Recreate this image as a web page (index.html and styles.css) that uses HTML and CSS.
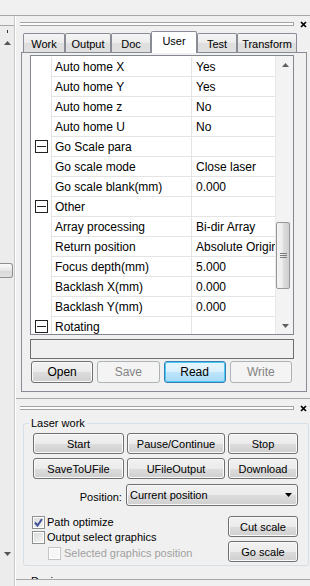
FILE: index.html
```html
<!DOCTYPE html>
<html>
	<head>
		<meta charset="UTF-8"/>
		<title>User parameters</title>
<link rel="stylesheet" href="styles.css">
	</head>
	<body>
		<div class="screen">
			<div class="top-gap"></div>
			<div class="main">
				<div class="side">
					<div class="side-head"></div>
					<div class="side-track">
						<span class="side-tick"></span>
						<svg class="side-up" width="7" height="4"><path d="M0 4 L3.5 0 L7 4Z" fill="#555"/></svg>
						<span class="side-thumb"></span>
						<svg class="side-down" width="7" height="4"><path d="M0 0 L3.5 4 L7 0Z" fill="#555"/></svg>
					</div>
				</div>

				<div class="docks">
					<section class="dock dock-props">
						<div class="dock-title">
							<span class="grip"></span>
							<svg class="close" width="7" height="7"><path d="M1 1 L6 6 M6 1 L1 6" stroke="#000" stroke-width="1.7"/></svg>
						</div>

						<div class="tabs">
							<div class="tab tab-work">Work</div>
							<div class="tab tab-output">Output</div>
							<div class="tab tab-doc">Doc</div>
							<div class="tab tab-user active">User</div>
							<div class="tab tab-test">Test</div>
							<div class="tab tab-transform">Transform</div>
						</div>

						<div class="tab-pane">
							<div class="pgrid">
								<div class="pg-rows" id="pg-rows"></div>
								<div class="pg-scroll">
									<div class="sb-btn"><svg width="7" height="4"><path d="M0 4 L3.5 0 L7 4Z" fill="#606060"/></svg></div>
									<div class="sb-track">
										<div class="sb-thumb">
											<svg width="7" height="5"><path d="M0 0.5 H7 M0 2.5 H7 M0 4.5 H7" stroke="#7d7d7d" stroke-width="1"/></svg>
										</div>
									</div>
									<div class="sb-btn"><svg width="7" height="4"><path d="M0 0 L3.5 4 L7 0Z" fill="#606060"/></svg></div>
								</div>
							</div>
							<div class="desc"></div>
							<div class="btn-row">
								<div class="btn">Open</div>
								<div class="btn disabled">Save</div>
								<div class="btn default">Read</div>
								<div class="btn disabled">Write</div>
							</div>
						</div>
					</section>

					<section class="dock dock-laser">
						<div class="dock-title">
							<span class="grip"></span>
							<svg class="close" width="7" height="7"><path d="M1 1 L6 6 M6 1 L1 6" stroke="#000" stroke-width="1.7"/></svg>
						</div>

						<fieldset class="group">
							<legend>Laser work</legend>
							<div class="work-btns">
								<div class="btn">Start</div>
								<div class="btn">Pause/Continue</div>
								<div class="btn">Stop</div>
								<div class="btn">SaveToUFile</div>
								<div class="btn">UFileOutput</div>
								<div class="btn">Download</div>
							</div>

							<div class="position-row">
								<span class="position-label">Position:</span>
								<div class="combo">
									<span>Current position</span>
									<svg width="7" height="4"><path d="M0 0 L3.5 4 L7 0Z" fill="#000"/></svg>
								</div>
							</div>

							<div class="options">
								<div class="checks">
									<label class="check"><span class="cb checked"><svg width="11" height="11"><path d="M2 5.5 L4.5 8.5 L9 2" stroke="#41539a" stroke-width="2" fill="none"/></svg></span>Path optimize</label>
									<label class="check"><span class="cb"></span>Output select graphics</label>
									<label class="check sub disabled"><span class="cb"></span>Selected graphics position</label>
								</div>
								<div class="scale-btns">
									<div class="btn">Cut scale</div>
									<div class="btn">Go scale</div>
								</div>
							</div>
						</fieldset>

						<fieldset class="group">
							<legend>Device</legend>
						</fieldset>
					</section>

					<div class="dock-bottom"></div>
				</div>
			</div>
		</div>

		<script>
			const params = [
				{ name: "Auto home X", value: "Yes" },
				{ name: "Auto home Y", value: "Yes" },
				{ name: "Auto home z", value: "No" },
				{ name: "Auto home U", value: "No" },
				{ name: "Go Scale para", group: true },
				{ name: "Go scale mode", value: "Close laser" },
				{ name: "Go scale blank(mm)", value: "0.000" },
				{ name: "Other", group: true },
				{ name: "Array processing", value: "Bi-dir Array" },
				{ name: "Return position", value: "Absolute Origin" },
				{ name: "Focus depth(mm)", value: "5.000" },
				{ name: "Backlash X(mm)", value: "0.000" },
				{ name: "Backlash Y(mm)", value: "0.000" },
				{ name: "Rotating", group: true }
			];

			const rows = document.getElementById('pg-rows');
			const toggle = '<svg width="13" height="13"><rect x="0.5" y="0.5" width="12" height="12" fill="#fff" stroke="#222"/><path d="M2 6.5 H11" stroke="#222"/></svg>';

			params.forEach(p => {
				const row = document.createElement('div');
				row.className = 'pg-row';
				row.innerHTML = `
					<div class="pg-margin">${p.group ? toggle : ''}</div>
					<div class="pg-name">${p.name}</div>
					<div class="pg-value">${p.value || ''}</div>
				`;
				rows.appendChild(row);
			});
		</script>
	</body>
</html>
```

FILE: styles.css
```css
* {
	box-sizing: border-box;
}

body {
	margin: 0;
	background: #f0f0f0;
	font-family: "Liberation Sans", Arial, sans-serif;
	font-size: 11px;
	color: #000;
}

.screen {
	width: 310px;
	height: 586px;
	overflow: hidden;
	display: flex;
	flex-direction: column;
}

.top-gap {
	height: 15px;
	flex: none;
}

.main {
	height: 571px;
	flex: none;
	border-top: 1px solid #a7a7a7;
	display: flex;
	overflow: hidden;
}

/* left neighbour strip */
.side {
	width: 15px;
	flex: none;
	border-right: 1px solid #c9c9c9;
	display: flex;
	flex-direction: column;
}

.side-head {
	height: 10px;
	border-bottom: 1px solid #a7a7a7;
}

.side-track {
	flex: 1;
	background: #ececec;
	display: flex;
	flex-direction: column;
	align-items: center;
}

.side-tick {
	width: 1px;
	height: 3px;
	margin-top: 4px;
	background: #333;
}

.side-up {
	margin-top: 8px;
	flex: none;
}

.side-thumb {
	align-self: flex-start;
	width: 13px;
	height: 15px;
	margin-top: 218px;
	border: 1px solid #8f8f8f;
	border-left: none;
	border-radius: 0 3px 3px 0;
	background: linear-gradient(#fbfbfb, #e6e6e6 50%, #d8d8d8 51%, #e2e2e2);
}

.side-down {
	margin-top: 274px;
	flex: none;
}

/* docked panels */
.docks {
	flex: 1;
	border-left: 1px solid #fff;
	display: flex;
	flex-direction: column;
	overflow: hidden;
}

.dock-props {
	flex: none;
	margin-bottom: 6px;
}

.dock-laser {
	flex: none;
	height: 181px;
	border-top: 1px solid #a7a7a7;
	overflow: hidden;
}

.dock-bottom {
	flex: 1;
	border-top: 1px solid #a7a7a7;
}

.dock-title {
	height: 15px;
	display: flex;
	align-items: flex-start;
	padding: 0 3px 0 4px;
}

.grip {
	width: 274px;
	height: 4px;
	margin-top: 6px;
	border: 1px solid #a4a4a4;
	border-left: none;
	background: #fbfbfb;
}

.close {
	margin: 5px 0 0 auto;
}

.dock-laser .grip {
	margin-top: 7px;
}

.dock-laser .close {
	margin-top: 6px;
}

/* tabs */
.tabs {
	height: 21px;
	display: flex;
	align-items: flex-end;
	padding-left: 7px;
}

.tab {
	height: 19px;
	border: 1px solid #898c95;
	border-bottom: none;
	border-radius: 2px 2px 0 0;
	background: linear-gradient(#f5f5f5, #ebebeb 50%, #dedede 51%, #e0e0e0);
	display: flex;
	align-items: center;
	justify-content: center;
	padding-top: 1px;
}

.tab.active {
	height: 22px;
	margin-bottom: -1px;
	background: #fff;
	z-index: 1;
	padding-top: 0;
	padding-bottom: 4px;
}

.tab-work { width: 42px; }
.tab-output { width: 46px; }
.tab-doc { width: 40px; }
.tab-user { width: 46px; }
.tab-test { width: 40px; }
.tab-transform { width: 60px; }

.tab-pane {
	margin: 0 3px 0 5px;
	border: 1px solid #898c95;
	padding: 2px 12px 8px 8px;
}

/* property grid */
.pgrid {
	height: 280px;
	border: 1px solid #828790;
	background: #fff;
	display: flex;
	font-size: 12px;
}

.pg-rows {
	flex: 1;
	padding-top: 1px;
	overflow: hidden;
}

.pg-row {
	display: flex;
	height: 20px;
}

.pg-margin {
	width: 20px;
	flex: none;
	display: flex;
	align-items: center;
	justify-content: center;
	padding: 0 0 1px 1px;
}

.pg-margin svg {
	display: block;
}

.pg-name,
.pg-value {
	border-left: 1px solid #e4e4e4;
	border-bottom: 1px solid #e4e4e4;
	line-height: 18px;
	padding-top: 1px;
	white-space: nowrap;
	overflow: hidden;
}

.pg-name {
	width: 140px;
	flex: none;
	padding-left: 3px;
}

.pg-value {
	flex: 1;
	padding-left: 4px;
}

.pg-scroll {
	width: 18px;
	flex: none;
	border-left: 1px solid #e9e9e9;
	background: #f3f3f3;
	display: flex;
	flex-direction: column;
}

.sb-btn {
	height: 17px;
	display: flex;
	align-items: center;
	justify-content: center;
	padding-left: 1px;
}

.sb-track {
	flex: 1;
	padding-top: 149px;
}

.sb-thumb {
	width: 14px;
	height: 67px;
	border: 1px solid #979797;
	border-radius: 2px;
	background: linear-gradient(90deg, #f4f4f4, #ececec 45%, #dcdcdc 55%, #cfcfcf);
	display: flex;
	align-items: center;
	justify-content: center;
}

.desc {
	height: 20px;
	margin-top: 4px;
	border: 1px solid #6e6e6e;
}

.btn-row {
	margin: 2px 2px 0 1px;
	display: grid;
	grid-template-columns: repeat(4, 1fr);
	gap: 4px;
}

.btn-row .btn {
	height: 22px;
	font-size: 12px;
}

/* buttons */
.btn {
	height: 21px;
	border: 1px solid #707070;
	border-radius: 3px;
	background: linear-gradient(#f2f2f2, #ebebeb 50%, #dddddd 51%, #cfcfcf);
	box-shadow: inset 0 0 0 1px #fafafa;
	display: flex;
	align-items: center;
	justify-content: center;
	white-space: nowrap;
}

.btn.disabled {
	border-color: #adb2b5;
	background: #f4f4f4;
	box-shadow: none;
	color: #838383;
}

.btn.default {
	border-color: #3c7fb1;
	background: linear-gradient(#eaf6fd, #d9f0fc 50%, #bee6fd 51%, #a7d9f5);
	box-shadow: inset 0 0 0 1px #48c9f8;
}

/* laser work group */
.group {
	margin: 3px 1px 0 7px;
	border: 1px solid #d5dfe5;
	border-radius: 3px;
	padding: 3px 10px 3px 9px;
	min-width: 0;
}

.group legend {
	margin-left: -4px;
	padding: 0 2px;
	line-height: 13px;
}

.group + .group {
	margin-top: 9px;
}

.work-btns {
	display: grid;
	grid-template-columns: 91px 98px 70px;
	gap: 4px 3px;
}

.position-row {
	margin-top: 5px;
	display: flex;
	align-items: center;
	gap: 4px;
}

.position-label {
	width: 90px;
	text-align: right;
	padding-top: 4px;
}

.combo {
	width: 174px;
	height: 22px;
	border: 1px solid #707070;
	border-radius: 3px;
	background: linear-gradient(#f2f2f2, #ebebeb 50%, #dddddd 51%, #cfcfcf);
	box-shadow: inset 0 0 0 1px #fafafa;
	display: flex;
	align-items: center;
	justify-content: space-between;
	padding: 0 5px 1px 3px;
}

.options {
	margin-top: 10px;
	display: flex;
	justify-content: space-between;
}

.checks {
	display: flex;
	flex-direction: column;
	margin-left: -1px;
}

.check {
	height: 15px;
	display: flex;
	align-items: flex-start;
	gap: 2px;
	line-height: 13px;
}

.check.sub {
	padding: 1px 0 0 16px;
	gap: 3px;
}

.check.disabled {
	color: #a0a0a0;
}

.cb {
	width: 13px;
	height: 13px;
	flex: none;
	border: 1px solid #8e8f8f;
	background: linear-gradient(135deg, #d8d9da, #f6f6f6);
	box-shadow: inset 0 0 0 1px #fff;
	display: flex;
	align-items: center;
	justify-content: center;
}

.check.disabled .cb {
	border-color: #c4c4c4;
	background: #f6f6f6;
}

.scale-btns {
	width: 70px;
	display: flex;
	flex-direction: column;
	gap: 4px;
}
```
